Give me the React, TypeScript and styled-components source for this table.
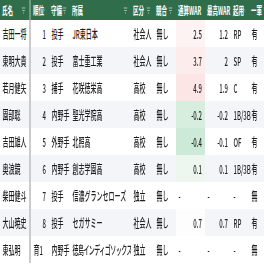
import styled, { createGlobalStyle } from 'styled-components';

const GlobalStyle = createGlobalStyle`
  html, body {
    margin: 0;
    padding: 0;
    background: #ffffff;
    overflow: hidden;
  }
`;

const Viewport = styled.div`
  width: 264px;
  height: 264px;
  overflow: hidden;
`;

// the sheet is laid out at double width and squeezed horizontally
const Sheet = styled.div`
  width: 540px;
  transform: scaleX(0.5);
  transform-origin: 0 0;
  font-family: "Noto Sans CJK JP", "Noto Sans", sans-serif;
  color: #1f1f1f;
`;

const COLUMNS = '62px 36px 42px 122px 46px 44px 58px 52px 36px 44px';

const HeaderRow = styled.div`
  display: grid;
  grid-template-columns: ${COLUMNS};
  height: 20px;
  background: #306e4b;
`;

const HeaderCell = styled.div<{ $frozen?: boolean }>`
  display: flex;
  align-items: center;
  justify-content: space-between;
  padding: 0 7px 0 4px;
  box-sizing: border-box;
  font-size: 11px;
  font-weight: 700;
  color: #ffffff;
  white-space: nowrap;
  overflow: hidden;
  border-right: ${({ $frozen }) => ($frozen ? '4px solid #6d9a80' : 'none')};
`;

const Row = styled.div<{ $alt?: boolean }>`
  display: grid;
  grid-template-columns: ${COLUMNS};
  height: 27px;
  background: ${({ $alt }) => ($alt ? '#f3f5f8' : '#ffffff')};
`;

const Cell = styled.div<{ $num?: boolean; $clip?: boolean; $frozen?: boolean; $heat?: string; $tight?: boolean }>`
  display: flex;
  align-items: center;
  justify-content: ${({ $num }) => ($num ? 'flex-end' : 'flex-start')};
  padding: ${({ $num }) => ($num ? '0 6px 0 4px' : '0 2px 0 5px')};
  box-sizing: border-box;
  font-size: 12px;
  font-weight: 500;
  letter-spacing: ${({ $tight }) => ($tight ? '-1.1px' : 'normal')};
  white-space: nowrap;
  overflow: ${({ $frozen, $clip }) => ($frozen || $clip ? 'hidden' : 'visible')};
  background: ${({ $heat }) => $heat || 'transparent'};
  border-right: ${({ $frozen }) => ($frozen ? '4px solid #cbcbcb' : 'none')};
`;

function FilterIcon() {
  return (
    <svg width="8" height="7" viewBox="0 0 8 7">
      <g stroke="#d3e3d9" strokeWidth="1">
        <line x1="0" y1="1" x2="8" y2="1" />
        <line x1="1.5" y1="3.5" x2="6.5" y2="3.5" />
        <line x1="3" y1="6" x2="5" y2="6" />
      </g>
    </svg>
  );
}

type Pick = {
  name: string;
  rank: number | string;
  pos: string;
  team: string;
  kind: string;
  war: number | null;
  best: number | null;
  role: string;
  ichi: string;
  heat?: string;
};

const picks: Pick[] = [
  { name: '吉田一将', rank: 1, pos: '投手', team: 'JR東日本', kind: '社会人', war: 2.5, best: 1.2, role: 'RP', ichi: '有', heat: '#fdf3f3' },
  { name: '東明大貴', rank: 2, pos: '投手', team: '富士重工業', kind: '社会人', war: 3.7, best: 2, role: 'SP', ichi: '有', heat: '#fcecec' },
  { name: '若月健矢', rank: 3, pos: '捕手', team: '花咲徳栄高', kind: '高校', war: 4.9, best: 1.9, role: 'C', ichi: '有', heat: '#fbe5e5' },
  { name: '園部聡', rank: 4, pos: '内野手', team: '聖光学院高', kind: '高校', war: -0.2, best: -0.2, role: '1B/3B', ichi: '有', heat: '#d7eedf' },
  { name: '吉田雄人', rank: 5, pos: '外野手', team: '北照高', kind: '高校', war: -0.4, best: -0.1, role: 'OF', ichi: '有', heat: '#cde9d8' },
  { name: '奥浪鏡', rank: 6, pos: '内野手', team: '創志学園高', kind: '高校', war: 0.1, best: 0.1, role: '1B/3B', ichi: '有', heat: '#edf7f0' },
  { name: '柴田健斗', rank: 7, pos: '投手', team: '信濃グランセローズ', kind: '独立', war: null, best: null, role: '-', ichi: '無' },
  { name: '大山暁史', rank: 8, pos: '投手', team: 'セガサミー', kind: '社会人', war: 0.7, best: 0.7, role: 'RP', ichi: '有', heat: '#fdfdfd' },
  { name: '東弘明', rank: '育1', pos: '内野手', team: '徳島インディゴソックス', kind: '独立', war: null, best: null, role: '-', ichi: '無' },
];

const headers = ['順位', '守備', '所属', '区分', '競合', '通算WAR', '最高WAR', '起用', '一軍'];

export default function App() {
  return (
    <Viewport>
      <GlobalStyle />
      <Sheet>
        <HeaderRow>
          <HeaderCell $frozen>
            <span>氏名</span>
            <FilterIcon />
          </HeaderCell>
          {headers.map((h) => (
            <HeaderCell key={h}>
              <span>{h}</span>
              <FilterIcon />
            </HeaderCell>
          ))}
        </HeaderRow>

        {picks.map((p, i) => (
          <Row key={p.name} $alt={i % 2 === 1}>
            <Cell $frozen>{p.name}</Cell>
            <Cell $num={typeof p.rank === 'number'}>{p.rank}</Cell>
            <Cell>{p.pos}</Cell>
            <Cell $clip $tight={p.team.length > 10}>{p.team}</Cell>
            <Cell>{p.kind}</Cell>
            <Cell>無し</Cell>
            <Cell $num={p.war !== null} $heat={p.heat}>
              {p.war === null ? '-' : p.war}
            </Cell>
            <Cell $num={p.best !== null}>{p.best === null ? '-' : p.best}</Cell>
            <Cell>{p.role}</Cell>
            <Cell>{p.ichi}</Cell>
          </Row>
        ))}
      </Sheet>
    </Viewport>
  );
}
